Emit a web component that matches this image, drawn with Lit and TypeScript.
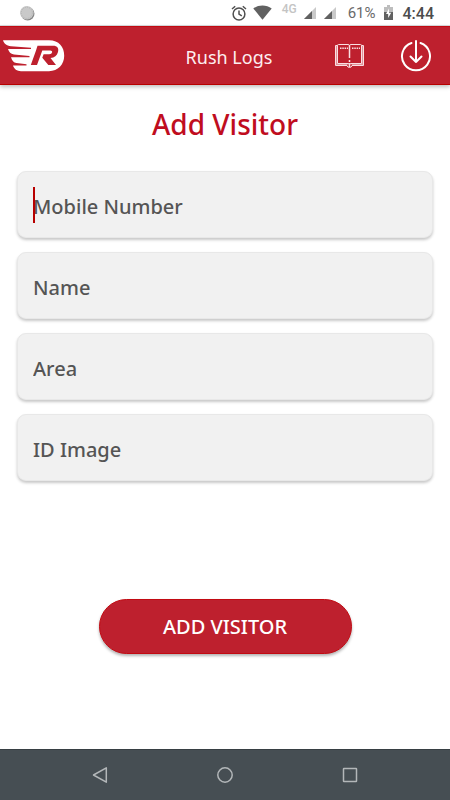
import { LitElement, html, css, nothing } from "lit";
import { customElement } from "lit/decorators.js";

@customElement("status-bar")
class StatusBar extends LitElement {
  static styles = css`
    :host {
      display: flex;
      align-items: center;
      justify-content: space-between;
      box-sizing: border-box;
      height: 26px;
      padding: 0 16px 0 19px;
      background: #fff;
      border-bottom: 1px solid #d9dcde;
      font-family: Roboto, sans-serif;
      color: #6a6a6a;
    }
    svg { display: block; }
    .right { display: flex; align-items: center; }
    .alarm { margin-right: 6px; }
    .wifi { margin-right: 10px; }
    .net {
      margin-right: 7px;
      align-self: flex-start;
      font-size: 12px;
      line-height: 17px;
      font-weight: 500;
      color: #c4c4c4;
    }
    .signal { margin-right: 8px; }
    .signal.last { margin-right: 12px; }
    .percent { margin-right: 8px; font-size: 15px; line-height: 21px; }
    .battery { margin-right: 10px; }
    .time { font-size: 16px; line-height: 21px; font-weight: 500; color: #4c4c4c; }
    .percent, .time { padding-top: 2px; }
  `;

  private signal(cls: string) {
    return html`<svg class=${cls} width="12" height="12" viewBox="0 0 12 12">
      <path d="M12 0V12H0Z" fill="#c9c9c9" />
      <path d="M8 4V12H0Z" fill="#616161" />
    </svg>`;
  }

  render() {
    return html`
      <svg width="16" height="16" viewBox="0 0 16 16">
        <circle cx="8.7" cy="8.8" r="6.8" fill="#858585" />
        <circle cx="7.8" cy="7.8" r="6.8" fill="#c9c9c9" />
        <circle cx="7.8" cy="7.8" r="5.6" fill="none" stroke="#b2b2b2" stroke-dasharray="1 1" />
      </svg>
      <div class="right">
        <svg class="alarm" width="16" height="16" viewBox="0 0 16 16" fill="none" stroke="#4f4f4f" stroke-width="1.5">
          <circle cx="8" cy="9" r="5.9" />
          <path d="M8 5.5V9.2L10.8 10.9M1 4L4.2 1.3M15 4L11.8 1.3" />
        </svg>
        <svg class="wifi" width="19" height="15" viewBox="0 0 19 15">
          <path d="M.3 3.4C5.5-.6 13.5-.6 18.7 3.4L9.5 14.7Z" fill="#616161" />
        </svg>
        <span class="net">4G</span>
        ${this.signal("signal")} ${this.signal("signal last")}
        <span class="percent">61%</span>
        <svg class="battery" width="9" height="15" viewBox="0 0 9 15">
          <path d="M0 2H3V0H6V2H9V15H0Z" fill="#bdbdbd" />
          <path d="M0 7H9V15H0Z" fill="#616161" />
          <path d="M5 3.5L2 9H4.2V13L7.2 7.7H5Z" fill="#fff" />
        </svg>
        <span class="time">4:44</span>
      </div>
    `;
  }
}

@customElement("app-bar")
class AppBar extends LitElement {
  static styles = css`
    :host {
      display: grid;
      grid-template-columns: 124px 1fr 116px;
      align-items: center;
      box-sizing: border-box;
      height: 59px;
      background: #be202e;
      border-top: 1px solid #c20a12;
      border-bottom: 1px solid #b80000;
      box-shadow: 0 2px 4px rgba(0, 0, 0, 0.25);
      color: #fff;
      font-family: "Noto Sans", "Open Sans", sans-serif;
    }
    svg { display: block; }
    .logo { margin-left: 3px; }
    .title {
      text-align: center;
      font-size: 18px;
      line-height: 24px;
      color: #fdeef0;
      margin-top: 2px;
    }
    .actions { display: flex; align-items: center; gap: 35px; }
    button {
      padding: 0;
      border: 0;
      background: none;
      cursor: pointer;
    }
  `;

  render() {
    return html`
      <svg class="logo" width="62" height="32" viewBox="0 0 62 32" role="img" aria-label="Rush">
        <path
          d="M0 .3H46C56 .3 61.2 7 61.2 15.8S55 31.2 46 31.2H18C14 31.2 11 29 10 25.5H23.5V24.3L13.5 23C10.5 22.5 9 20.5 8 17.2H26.5V16L11 14.5C7.5 14 6 12 5 9H28V7.8L8 6.2C3.5 5.8 1 3.5 0 .3Z"
          fill="#fff"
        />
        <path
          d="M34.5 5.8H50C54.5 5.8 56 8.5 55 12C54 15.8 51.5 17.6 47.5 18.1L53 24.9H45.3L39.3 17.8L40.6 14.2H46.2C47.8 14.2 48.8 13.6 49.1 12.3C49.3 11.2 48.6 10.5 47.2 10.5H39.3L34 24.9H27.8L33 10.5Z"
          fill="#be202e"
        />
      </svg>
      <div class="title">Rush Logs</div>
      <div class="actions">
        <button aria-label="Log book">
          <svg width="31" height="26" viewBox="0 0 31 26" fill="none" stroke="#f9dfe2">
            <path d="M3.5 2.5Q3.5 1.5 4.5 1.5H14Q15.5 1.5 15.5 3Q15.5 1.5 17 1.5H26.5Q27.5 1.5 27.5 2.5V20.5H17Q15.5 20.5 15.5 22Q15.5 20.5 14 20.5H3.5Z" />
            <path d="M3.5 2.5H1.5V22.5H13Q13.5 24.5 15.5 24.5T18 22.5H29.5V2.5H27.5" />
            <path d="M2.5 3V21.5H13.5M28.5 3V21.5H17.5" stroke-width="1.5" opacity=".6" />
            <path d="M15.5 3V15M15.5 17V19M15.5 20V24" stroke-width="1.5" />
            <path d="M6 5.2H14M18 5.2H26" stroke-dasharray="1.5 .8" stroke-width="1.5" />
          </svg>
        </button>
        <button aria-label="Download">
          <svg width="32" height="32" viewBox="0 0 32 32" fill="none" stroke="#fff" stroke-width="2" stroke-linecap="round" stroke-linejoin="round">
            <path d="M11.5 3A14 14 0 1 0 20.5 3" />
            <path d="M16 1V22M10.5 16.5L16 22L21.5 16.5" />
          </svg>
        </button>
      </div>
    `;
  }
}

@customElement("form-field")
class FormField extends LitElement {
  static properties = {
    label: { type: String },
    active: { type: Boolean },
  };
  declare label: string;
  declare active: boolean;

  static styles = css`
    :host { display: block; position: relative; }
    input {
      display: block;
      box-sizing: border-box;
      width: 100%;
      height: 67px;
      padding: 4px 15px 0;
      border: 1px solid #e8e8e8;
      border-radius: 9px;
      background: #f1f1f1;
      box-shadow: 0 2px 3px rgba(0, 0, 0, 0.22);
      outline: none;
      color: #505050;
      caret-color: #b80000;
      font: 500 20px "Noto Sans", "Open Sans", sans-serif;
    }
    input::placeholder { color: #555; opacity: 1; }
    .caret {
      position: absolute;
      left: 16px;
      top: 16px;
      width: 2px;
      height: 36px;
      background: #b80000;
    }
  `;

  render() {
    return html`
      <input type="text" aria-label=${this.label} placeholder=${this.label} />
      ${this.active ? html`<span class="caret"></span>` : nothing}
    `;
  }
}

@customElement("nav-bar")
class NavBar extends LitElement {
  static styles = css`
    :host {
      display: flex;
      align-items: center;
      justify-content: center;
      gap: 109px;
      box-sizing: border-box;
      height: 51px;
      background: #464e53;
      border-top: 1px solid #373f43;
    }
    button {
      padding: 0;
      border: 0;
      background: none;
      cursor: pointer;
    }
    svg { display: block; fill: none; stroke: #b3b7b9; stroke-width: 1.5; }
  `;

  render() {
    return html`
      <button aria-label="Back">
        <svg width="16" height="16" viewBox="0 0 16 16"><path d="M14.3 .8V15.2L1.5 8Z" stroke-linejoin="round" /></svg>
      </button>
      <button aria-label="Home">
        <svg width="16" height="16" viewBox="0 0 16 16"><circle cx="8" cy="8" r="7.2" /></svg>
      </button>
      <button aria-label="Recent apps">
        <svg width="16" height="16" viewBox="0 0 16 16"><rect x="1.5" y="1.5" width="13" height="13" rx=".5" /></svg>
      </button>
    `;
  }
}

@customElement("app-root")
class AppRoot extends LitElement {
  static styles = css`
    :host {
      display: flex;
      flex-direction: column;
      min-height: 100vh;
      background: #fff;
      font-family: "Noto Sans", "Open Sans", sans-serif;
    }
    main {
      flex: 1;
      display: flex;
      flex-direction: column;
      padding: 20px 17px 95px;
    }
    h1 {
      margin: 0 0 28px;
      text-align: center;
      font-size: 28px;
      line-height: 38px;
      font-weight: 500;
      color: #c00d1e;
    }
    form {
      flex: 1;
      display: flex;
      flex-direction: column;
      gap: 14px;
    }
    .submit {
      align-self: center;
      margin-top: auto;
      width: 60%;
      min-width: 253px;
      height: 55px;
      padding: 0;
      border: 1px solid #c20a12;
      border-radius: 28px;
      background: #be202e;
      box-shadow: 0 2px 3px rgba(0, 0, 0, 0.3);
      color: #fff;
      font: 500 20px "Noto Sans", "Open Sans", sans-serif;
      cursor: pointer;
    }
  `;

  private fields = ["Mobile Number", "Name", "Area", "ID Image"];

  render() {
    return html`
      <status-bar></status-bar>
      <app-bar></app-bar>
      <main>
        <h1>Add Visitor</h1>
        <form @submit=${(e: Event) => e.preventDefault()}>
          ${this.fields.map((f, i) => html`<form-field .label=${f} .active=${i === 0}></form-field>`)}
          <button class="submit" type="submit">ADD VISITOR</button>
        </form>
      </main>
      <nav-bar></nav-bar>
    `;
  }
}
